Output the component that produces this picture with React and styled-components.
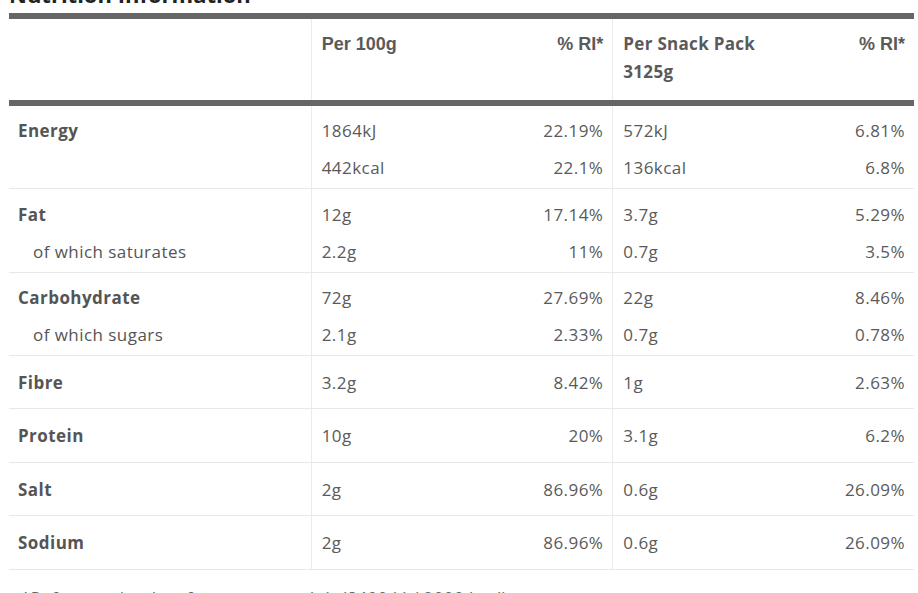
import React from "react";
import styled, { createGlobalStyle } from "styled-components";

const Global = createGlobalStyle`
  html, body { margin: 0; padding: 0; background: #fff; overflow: hidden; }
  body { font-family: "Open Sans", "Liberation Sans", sans-serif; color: #555; }
`;

const Page = styled.div`
  width: 918px;
  height: 593px;
  overflow: hidden;
  box-sizing: border-box;
  padding: 0 4px 0 9px;
`;

const Title = styled.h2`
  margin: -17.5px 0 8.5px 0;
  font-size: 22px;
  line-height: 22px;
  font-weight: 700;
  color: #222;
`;

const Table = styled.div`
  border-top: 6px solid #666;
`;

const Row = styled.div`
  display: grid;
  grid-template-columns: 1fr 1fr 1fr;
  border-bottom: ${(p) => (p.$head ? "6px solid #666" : "1px solid #e8e8e8")};
`;

const Cell = styled.div`
  box-sizing: border-box;
  padding: ${(p) => p.$pad} 9px ${(p) => p.$padBottom} ${(p) => (p.$first ? "9px" : "10px")};
  border-left: ${(p) => (p.$first ? "none" : "1px solid #ebebeb")};
  min-width: 0;
`;

const Line = styled.div`
  display: flex;
  justify-content: space-between;
  align-items: center;
  height: 37px;
  font-size: 17px;
  letter-spacing: 0.45px;
`;

const Label = styled.span`
  font-weight: ${(p) => (p.$sub ? 400 : 700)};
  padding-left: ${(p) => (p.$sub ? "15px" : "0")};
  color: #555;
`;

const Val = styled.span`
  color: #5a5a5a;
`;

const HeadCell = styled.div`
  box-sizing: border-box;
  padding: 11px 9px 14px 10px;
  border-left: ${(p) => (p.$first ? "none" : "1px solid #ebebeb")};
  display: flex;
  justify-content: space-between;
  align-items: flex-start;
`;

const HeadText = styled.span`
  font-family: ${(p) => (p.$alt ? '"Open Sans", sans-serif' : '"Liberation Sans", Arial, sans-serif')};
  font-weight: 700;
  font-size: ${(p) => (p.$alt ? "17px" : "18px")};
  letter-spacing: ${(p) => (p.$alt ? "0.3px" : "0")};
  line-height: 28px;
  color: #5a5a5a;
  max-width: ${(p) => (p.$alt ? "150px" : "none")};
`;

const Footnote = styled.div`
  margin-top: 15px;
  padding-left: 12px;
  font-size: 17px;
  line-height: 25px;
  letter-spacing: 0.45px;
  color: #666;
`;

const rows = [
  { label: "Energy", lines: [["1864kJ", "22.19%", "572kJ", "6.81%"], ["442kcal", "22.1%", "136kcal", "6.8%"]], sub: null },
  { label: "Fat", sub: "of which saturates", lines: [["12g", "17.14%", "3.7g", "5.29%"], ["2.2g", "11%", "0.7g", "3.5%"]] },
  { label: "Carbohydrate", sub: "of which sugars", lines: [["72g", "27.69%", "22g", "8.46%"], ["2.1g", "2.33%", "0.7g", "0.78%"]] },
  { label: "Fibre", lines: [["3.2g", "8.42%", "1g", "2.63%"]] },
  { label: "Protein", lines: [["10g", "20%", "3.1g", "6.2%"]] },
  { label: "Salt", lines: [["2g", "86.96%", "0.6g", "26.09%"]] },
  { label: "Sodium", lines: [["2g", "86.96%", "0.6g", "26.09%"]] },
];

function NutrientRow({ r }) {
  const double = r.lines.length > 1;
  const top = double ? "6.25px" : "7.75px";
  const bottom = double ? "2px" : "7.75px";
  return (
    <Row>
      <Cell $first $pad={top} $padBottom={bottom}>
        <Line><Label>{r.label}</Label></Line>
        {double && (
          <Line>{r.sub ? <Label $sub>{r.sub}</Label> : null}</Line>
        )}
      </Cell>
      <Cell $pad={top} $padBottom={bottom}>
        {r.lines.map((l, i) => (
          <Line key={i}><Val>{l[0]}</Val><Val>{l[1]}</Val></Line>
        ))}
      </Cell>
      <Cell $pad={top} $padBottom={bottom}>
        {r.lines.map((l, i) => (
          <Line key={i}><Val>{l[2]}</Val><Val>{l[3]}</Val></Line>
        ))}
      </Cell>
    </Row>
  );
}

export default function App() {
  return (
    <>
      <Global />
      <Page>
        <Title>Nutrition Information</Title>
        <Table>
          <Row $head>
            <HeadCell $first />
            <HeadCell>
              <HeadText>Per 100g</HeadText>
              <HeadText>% RI*</HeadText>
            </HeadCell>
            <HeadCell>
              <HeadText $alt>Per Snack Pack 3125g</HeadText>
              <HeadText>% RI*</HeadText>
            </HeadCell>
          </Row>
          {rows.map((r) => (
            <NutrientRow key={r.label} r={r} />
          ))}
        </Table>
        <Footnote>*Reference intake of an average adult (8400 kJ / 2000 kcal)</Footnote>
      </Page>
    </>
  );
}
